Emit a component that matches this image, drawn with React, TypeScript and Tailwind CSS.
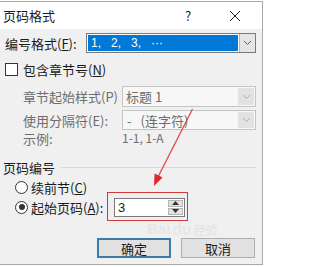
import React from "react";

const Chevron = ({ color = "#606060" }: { color?: string }) => (
  <svg width="9" height="6" viewBox="0 0 9 6">
    <polyline points="1,1 4.5,4.5 8,1" fill="none" stroke={color} strokeWidth="1" />
  </svg>
);

export default function App() {
  return (
    <div className="relative w-[264px] h-[267px] bg-white pt-[1px] overflow-hidden font-['Noto_Sans_CJK_SC','Liberation_Sans',sans-serif] text-[13px] leading-none text-[#1a1a1a]">
      <div className="w-[263px] h-[264px] border-t border-r border-b border-[#a8a8a8] flex flex-col">
        {/* title bar */}
        <div className="h-[27px] bg-white flex items-center">
          <span className="ml-[3px] text-[13px]">页码格式</span>
          <span className="ml-auto w-[10px] text-center text-[13px] mr-[36px]">?</span>
          <svg width="12" height="12" viewBox="0 0 12 12" className="mr-[21px]">
            <line x1="1" y1="1" x2="11" y2="11" stroke="#222" strokeWidth="1" />
            <line x1="11" y1="1" x2="1" y2="11" stroke="#222" strokeWidth="1" />
          </svg>
        </div>
        {/* body */}
        <div className="flex-1 bg-[#f0f0f0] flex flex-col pt-[4px]">
          {/* row 1 */}
          <div className="h-[20px] flex items-center">
            <span className="ml-[5px] w-[81px] whitespace-nowrap">
              编号格式(<span className="underline">F</span>):
            </span>
            <div className="w-[170px] h-[20px] border border-[#7a7a7a] bg-white flex items-stretch">
              <div className="flex-1 m-[1px] bg-[#0078d7] text-white flex items-center pl-[3px] whitespace-pre text-[12px] font-['Liberation_Sans',sans-serif]">
                1,   2,   3,   ···
              </div>
              <div className="w-[16px] bg-[#e5e5e5] border-l border-[#b8b8b8] flex items-center justify-center">
                <Chevron />
              </div>
            </div>
          </div>
          {/* row 2 */}
          <div className="h-[33px] flex items-center">
            <div className="ml-[5px] w-[13px] h-[13px] border border-[#333] bg-white" />
            <span className="ml-[5px]">
              包含章节号(<span className="underline">N</span>)
            </span>
          </div>
          {/* row 3 */}
          <div className="h-[21px] flex items-center text-[#6d6d6d]">
            <span className="ml-[23px] w-[99px] whitespace-nowrap">章节起始样式(P)</span>
            <div className="w-[134px] h-[21px] border border-[#c4c4c4] bg-[#f7f7f7] flex items-stretch">
              <div className="flex-1 flex items-center pl-[3px]">标题 1</div>
              <div className="w-[16px] my-[1px] mr-[1px] bg-[#e2e2e2] flex items-center justify-center">
                <Chevron color="#b0b0b0" />
              </div>
            </div>
          </div>
          {/* row 4 */}
          <div className="mt-[3px] h-[20px] flex items-center text-[#6d6d6d]">
            <span className="ml-[23px] w-[99px] whitespace-nowrap">使用分隔符(E):</span>
            <div className="w-[134px] h-[20px] border border-[#c4c4c4] bg-[#f7f7f7] flex items-stretch">
              <div className="flex-1 flex items-center pl-[4px] whitespace-nowrap">
                -<span className="ml-[9px]">(连字符)</span>
              </div>
              <div className="w-[16px] my-[1px] mr-[1px] bg-[#e2e2e2] flex items-center justify-center">
                <Chevron color="#b0b0b0" />
              </div>
            </div>
          </div>
          {/* row 5 */}
          <div className="h-[16px] flex items-center text-[#6d6d6d]">
            <span className="ml-[23px] w-[99px]">示例:</span>
            <span className="text-[12px]">1-1, 1-A</span>
          </div>
          {/* group header */}
          <div className="mt-[12px] h-[18px] flex items-center">
            <span className="ml-[3px]">页码编号</span>
            <div className="flex-1 h-px bg-[#d8d8d8] ml-[6px] mr-[6px]" />
          </div>
          {/* radio 1 */}
          <div className="mt-[2px] h-[19px] flex items-center">
            <div className="ml-[15px] w-[13px] h-[13px] rounded-full border border-[#333] bg-white" />
            <span className="ml-[3px]">
              续前节(<span className="underline">C</span>)
            </span>
          </div>
          {/* radio 2 */}
          <div className="h-[20px] flex items-center">
            <div className="ml-[15px] w-[13px] h-[13px] rounded-full border border-[#333] bg-white flex items-center justify-center">
              <div className="w-[6px] h-[6px] rounded-full bg-[#333]" />
            </div>
            <span className="ml-[3px] w-[83px] whitespace-nowrap">
              起始页码(<span className="underline">A</span>):
            </span>
            <div className="w-[71px] h-[19px] border border-[#7a7a7a] bg-white flex items-stretch">
              <div className="flex-1 flex items-center pl-[3px] font-['Liberation_Sans',sans-serif]">3</div>
              <div className="w-[15px] my-[1px] mr-[1px] flex flex-col gap-px">
                <div className="flex-1 bg-[#e2e2e2] border border-[#b5b5b5] flex items-center justify-center">
                  <svg width="7" height="4" viewBox="0 0 7 4"><polygon points="0,4 7,4 3.5,0" fill="#333" /></svg>
                </div>
                <div className="flex-1 bg-[#e2e2e2] border border-[#b5b5b5] flex items-center justify-center">
                  <svg width="7" height="4" viewBox="0 0 7 4"><polygon points="0,0 7,0 3.5,4" fill="#333" /></svg>
                </div>
              </div>
            </div>
          </div>
          {/* buttons */}
          <div className="mt-[21px] flex justify-end gap-[10px] mr-[7px]">
            <div className="w-[74px] h-[20px] border-2 border-[#3c7aa8] bg-[#e1e1e1] flex items-center justify-center">
              确定
            </div>
            <div className="w-[74px] h-[20px] border border-[#adadad] bg-[#e1e1e1] flex items-center justify-center">
              取消
            </div>
          </div>
        </div>
      </div>

      {/* watermark */}
      <div className="absolute left-[147px] top-[221px] flex items-end gap-[2px] pointer-events-none">
        <span className="text-[15px] font-bold text-[#e6e6e6] font-['Liberation_Sans',sans-serif]">Bai</span>
        <span className="text-[15px] font-bold text-[#e6e6e6]">du</span>
        <span className="text-[12px] text-[#e0e0e0]">经验</span>
      </div>

      {/* red annotation box */}
      <div className="absolute left-[107px] top-[192px] w-[81px] h-[29px] border border-[#d0393a]" />

      {/* red arrow */}
      <svg className="absolute left-0 top-0 pointer-events-none" width="264" height="267" viewBox="0 0 264 267">
        <line x1="192.5" y1="109" x2="158" y2="177" stroke="#e04848" strokeWidth="1.3" />
        <polygon points="154,186 162.6,177.6 154.6,173.6" fill="#e02828" />
      </svg>
    </div>
  );
}
